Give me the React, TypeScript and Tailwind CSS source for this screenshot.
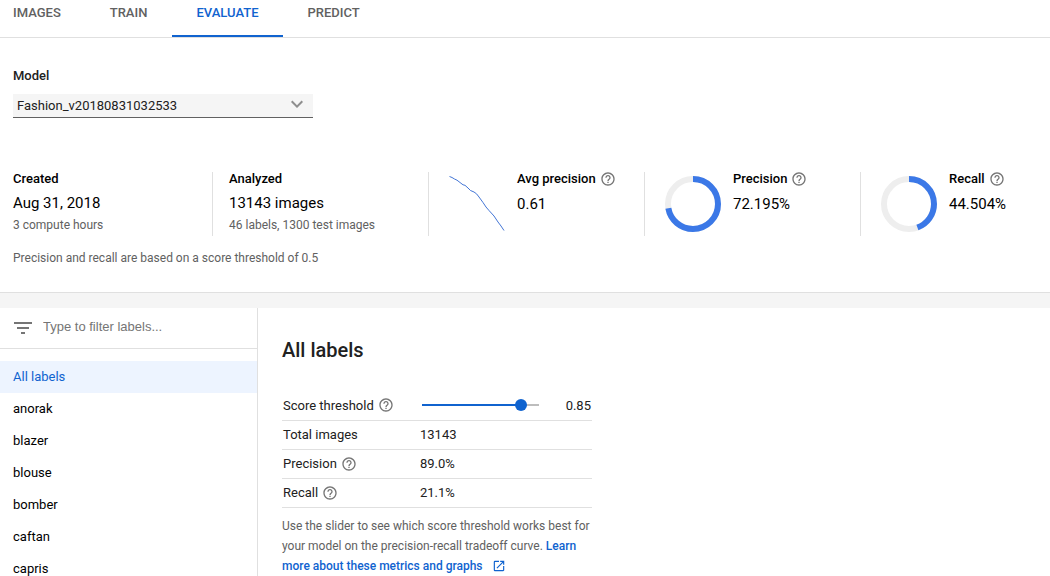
import { useState } from 'react';
import type { ReactNode } from 'react';
import { MdExpandMore, MdFilterList, MdHelpOutline, MdOpenInNew } from 'react-icons/md';

const tabs = ['IMAGES', 'TRAIN', 'EVALUATE', 'PREDICT'];
const labels = ['All labels', 'anorak', 'blazer', 'blouse', 'bomber', 'caftan', 'capris'];

function Help({ topic }: { topic: string }) {
  return (
    <button type="button" aria-label={`About ${topic}`} className="shrink-0 text-[#757575]">
      <MdHelpOutline className="size-4" />
    </button>
  );
}

function Donut({ percent }: { percent: number }) {
  return (
    <svg viewBox="0 0 56 56" className="mt-1 size-14 shrink-0" fill="none" strokeWidth="6" aria-hidden="true">
      <circle cx="28" cy="28" r="25" stroke="#eeeeee" />
      <circle
        cx="28"
        cy="28"
        r="25"
        stroke="#3b78e7"
        pathLength="100"
        strokeDasharray={`${percent} 100`}
        transform="rotate(-90 28 28)"
      />
    </svg>
  );
}

function Curve() {
  return (
    <svg viewBox="0 0 56 56" className="mt-1 size-14 shrink-0" fill="none" aria-hidden="true">
      <path
        d="M0.500 .5L3 1.500L5.500 3L8 4.200L11 6.500L14 8.800L16 9.300L19 12L21.500 14.500L25 16L27.500 17.800L30 21L34 26.500L37 31L40 34.500L45 40L49 46L52 50L55 54.500"
        stroke="#2f66d0"
        strokeWidth="0.9"
      />
    </svg>
  );
}

function Metric({ title, value, chart }: { title: string; value: string; chart: ReactNode }) {
  return (
    <section className="flex h-16 w-[216px] shrink-0 gap-3 border-l border-[#e0e0e0] pl-5 last:w-auto">
      {chart}
      <div>
        <h2 className="flex h-3.5 items-center gap-1 font-medium">
          {title}
          <Help topic={title} />
        </h2>
        <p className="mt-1.5 text-[15px] leading-6">{value}</p>
      </div>
    </section>
  );
}

function Fact({ title, value, note }: { title: string; value: string; note: string }) {
  return (
    <section>
      <h2 className="font-medium leading-[14px]">{title}</h2>
      <p className="mt-1.5 text-[15px] leading-[22px]">{value}</p>
      <p className="mt-1 text-xs leading-[14px] text-[#616161]">{note}</p>
    </section>
  );
}

function Row({ name, help, children }: { name: string; help?: boolean; children: ReactNode }) {
  return (
    <tr className="h-[29px] border-b border-[#e0e0e0]">
      <th scope="row" className="w-[138px] p-0 pl-px text-left font-normal">
        <span className="flex items-center gap-1">
          {name}
          {help && <Help topic={name} />}
        </span>
      </th>
      <td className="p-0">{children}</td>
    </tr>
  );
}

export default function App() {
  const [threshold, setThreshold] = useState(0.85);
  const [selected, setSelected] = useState('All labels');

  return (
    <div className="flex h-screen flex-col overflow-hidden bg-white font-[Roboto,sans-serif] text-[13px] text-black">
      <nav className="flex shrink-0 gap-px border-b border-[#e0e0e0]">
        {tabs.map((tab) => (
          <a
            key={tab}
            href={`#${tab.toLowerCase()}`}
            className={`border-b-2 px-6 pb-3.5 pt-[5px] font-medium leading-4 first:pl-[13px] ${
              tab === 'EVALUATE' ? 'border-[#1063cf] text-[#1063cf]' : 'border-transparent text-[#616161]'
            }`}
          >
            {tab}
          </a>
        ))}
      </nav>

      <header className="shrink-0 border-b border-[#e0e0e0] pb-[26px] pl-[13px] pt-[30px]">
        <label htmlFor="model" className="block font-medium leading-4 text-[#212121]">
          Model
        </label>
        <div className="mt-2.5 grid h-6 w-[300px] grid-rows-[24px] items-center">
          <select
            id="model"
            className="h-6 appearance-none rounded-none border-b border-[#616161] bg-[#f5f5f5] pl-1 text-[#212121] [grid-area:1/1]"
          >
            <option>Fashion_v20180831032533</option>
          </select>
          <MdExpandMore className="pointer-events-none mb-1 mr-1 size-6 justify-self-end text-[#8e8e8e] [grid-area:1/1]" />
        </div>

        <div className="mt-[54px] flex">
          <div className="w-[199px] shrink-0">
            <Fact title="Created" value="Aug 31, 2018" note="3 compute hours" />
          </div>
          <div className="h-16 w-[216px] shrink-0 border-l border-[#e0e0e0] pl-4">
            <Fact title="Analyzed" value="13143 images" note="46 labels, 1300 test images" />
          </div>
          <Metric title="Avg precision" value="0.61" chart={<Curve />} />
          <Metric title="Precision" value="72.195%" chart={<Donut percent={72.195} />} />
          <Metric title="Recall" value="44.504%" chart={<Donut percent={44.504} />} />
        </div>
        <p className="mt-3.5 text-xs text-[#616161]">Precision and recall are based on a score threshold of 0.5</p>
      </header>

      <div className="h-[15px] shrink-0 bg-[#f5f5f5]" />

      <div className="flex min-h-0 flex-1">
        <aside className="w-[258px] shrink-0 overflow-hidden border-r border-[#e0e0e0]">
          <div className="flex h-[41px] items-center gap-2 border-b border-[#e0e0e0] pl-[11px]">
            <MdFilterList className="size-6 text-[#757575]" aria-hidden="true" />
            <input
              type="text"
              aria-label="Filter labels"
              placeholder="Type to filter labels..."
              className="min-w-0 flex-1 pb-0.5 font-['Liberation_Sans',sans-serif] outline-none placeholder:text-[#757575]"
            />
          </div>
          <ul className="mt-3">
            {labels.map((label) => (
              <li key={label}>
                <button
                  type="button"
                  onClick={() => setSelected(label)}
                  className={`h-8 w-full pl-[13px] text-left ${label === selected ? 'bg-[#edf4ff] text-[#1063cf]' : ''}`}
                >
                  {label}
                </button>
              </li>
            ))}
          </ul>
        </aside>

        <main className="min-w-0 flex-1 overflow-hidden pl-6 pt-[30px] text-[#212121]">
          <h1 className="text-xl font-medium leading-6">{selected}</h1>
          <table className="mt-[29px] w-[310px] border-collapse">
            <tbody>
              <Row name="Score threshold" help>
                <div className="flex items-center justify-between pl-0.5 pr-px">
                  <div className="grid w-[117px] items-center">
                    <div className="h-0.5 bg-[#bdbdbd] [grid-area:1/1]">
                      <div className="h-full bg-[#1063cf]" style={{ width: `${threshold * 100}%` }} />
                    </div>
                    <input
                      type="range"
                      aria-label="Score threshold"
                      min="0"
                      max="1"
                      step="0.01"
                      value={threshold}
                      onChange={(e) => setThreshold(Number(e.target.value))}
                      className="-mx-1.5 h-3 w-[129px] appearance-none bg-transparent [grid-area:1/1] [&::-webkit-slider-thumb]:size-3 [&::-webkit-slider-thumb]:appearance-none [&::-webkit-slider-thumb]:rounded-full [&::-webkit-slider-thumb]:bg-[#1063cf]"
                    />
                  </div>
                  <output>{threshold.toFixed(2)}</output>
                </div>
              </Row>
              <Row name="Total images">13143</Row>
              <Row name="Precision" help>
                89.0%
              </Row>
              <Row name="Recall" help>
                21.1%
              </Row>
            </tbody>
          </table>
          <p className="mt-2 w-[320px] text-xs leading-5 text-[#616161]">
            Use the slider to see which score threshold works best for your model on the precision-recall tradeoff curve.{' '}
            <a href="#metrics" className="font-medium text-[#1063cf]">
              Learn more about these metrics and graphs <MdOpenInNew className="ml-1.5 inline size-3.5 align-[-3px]" />
            </a>
          </p>
        </main>
      </div>
    </div>
  );
}
